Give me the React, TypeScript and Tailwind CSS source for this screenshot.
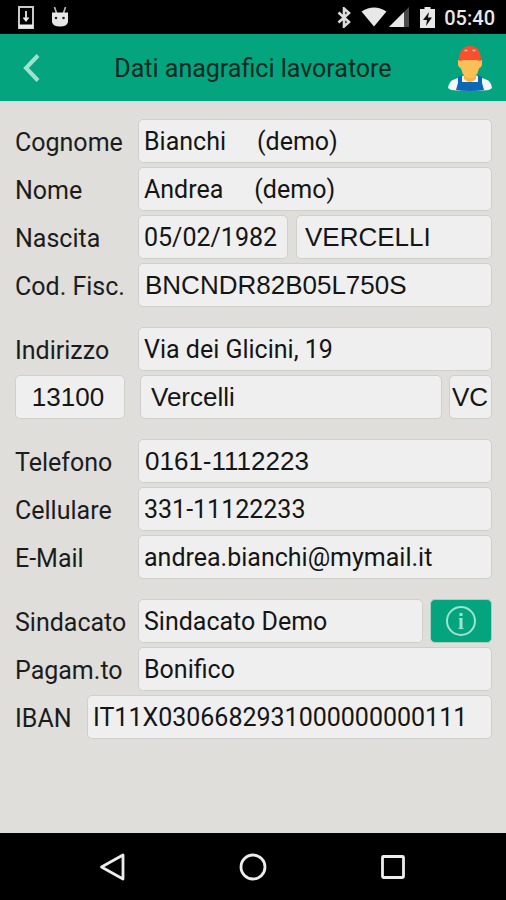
import React from 'react';
import { clsx } from 'clsx';

type FieldProps = React.InputHTMLAttributes<HTMLInputElement>;

function Field({ className, ...props }: FieldProps) {
  return (
    <input
      {...props}
      className={clsx(
        'h-11 min-w-0 rounded-[5px] border border-[#cfcfcc] bg-[#efefef] text-[#151515] outline-none',
        className,
      )}
    />
  );
}

function Label({ htmlFor, children, short }: { htmlFor: string; children: React.ReactNode; short?: boolean }) {
  return (
    <label
      htmlFor={htmlFor}
      className={clsx('shrink-0 whitespace-nowrap pt-1 text-[25px] text-[#1c1c1c]', short ? 'w-18' : 'w-[123px]')}
    >
      {children}
    </label>
  );
}

function Row({ children }: { children: React.ReactNode }) {
  return <div className="flex items-center">{children}</div>;
}

function Group({ children }: { children: React.ReactNode }) {
  return <div className="flex flex-col gap-1">{children}</div>;
}

const roboto = "font-['Roboto',sans-serif] text-[25px] px-[5px]";
const arial = "font-['Liberation_Sans',Arial,sans-serif] text-[26px]";

function StatusBar() {
  return (
    <div className="flex h-[34px] items-center bg-black pl-[18px] pr-[11px] text-[#e8e8e8]">
      <svg width="16" height="23" viewBox="0 0 16 23" aria-hidden="true">
        <rect x="1" y="1" width="14" height="21" fill="none" stroke="#c9c9c9" strokeWidth="2" />
        <path d="M1 20.500h14" stroke="#ededed" strokeWidth="4" />
        <path d="M8 5v9M5.500 11.500l2.500 3 2.500-3" fill="none" stroke="#e8e8e8" strokeWidth="1.800" />
      </svg>
      <svg width="18" height="20" viewBox="0 0 18 20" className="ml-[17px]" aria-hidden="true">
        <path d="M3.500 0l2 6M14.500 0l-2 6" stroke="#bdbdbd" strokeWidth="1.600" />
        <path d="M1 5.500h16V15q-1 4.500-8 4.500T1 15z" fill="#e8e8e8" />
        <circle cx="5" cy="11" r="1.300" fill="#222" />
        <circle cx="12.500" cy="11" r="1.300" fill="#222" />
      </svg>
      <div className="flex-1" />
      <svg width="14" height="21" viewBox="0 0 14 21" aria-hidden="true">
        <path d="M1.500 5.500L12 15l-5 4.500V1.500L12 6 1.500 15.500" fill="none" stroke="#dcdcdc" strokeWidth="2.600" />
      </svg>
      <svg width="26" height="20" viewBox="0 0 26 20" className="ml-[10px]" aria-hidden="true">
        <path d="M0.500 4.500Q13-3.500 25.500 4.500L13 19.500z" fill="#e8e8e8" />
      </svg>
      <svg width="20" height="20" viewBox="0 0 20 20" className="ml-[2px]" aria-hidden="true">
        <path d="M20 0v20H0z" fill="#4a4a4a" />
        <path d="M15 5v15H0z" fill="#e8e8e8" />
      </svg>
      <svg width="15" height="21" viewBox="0 0 15 21" className="ml-[11px]" aria-hidden="true">
        <path d="M4.500 0h6v2H15v19H0V2h4.500z" fill="#e8e8e8" />
        <path d="M9 5l-6 8h4l-1 6 6-8.500H8z" fill="#111" />
      </svg>
      <span className="ml-[9px] pt-[2px] text-[20px] font-medium">05:40</span>
    </div>
  );
}

function WorkerIcon() {
  return (
    <svg width="44" height="46" viewBox="0 0 44 46" aria-hidden="true">
      <path d="M0 43q1-7 6-8.500l10-4h12l10 4q5 1.500 6 8.500-2 2.500-9 2.500H9Q2 45.500 0 43z" fill="#f4f6fa" />
      <path d="M16 26h12v8q-6 6-12 0z" fill="#f6b444" />
      <path d="M10 15h24v5q-1 3-3 3.500-2 9.500-9 9.500t-9-9.500q-2-.5-3-3.500z" fill="#fbbf57" />
      <path d="M11 16Q11 1 22 1t11 15q-11-2.500-22 0z" fill="#f8502f" />
      <path d="M16.500 5.500h3M24.500 5.500h3" stroke="#ffb7a4" strokeWidth="1.500" />
      <path d="M10 32l4-2v7h16v-7l4 2v6l2 7q-14 2-28 0l2-7z" fill="#0d67b8" />
    </svg>
  );
}

export default function App() {
  return (
    <div className="flex min-h-screen flex-col bg-[#dfdeda] font-['Roboto',sans-serif]">
      <StatusBar />

      {/* Title bar */}
      <header className="flex h-[67px] items-center bg-[#04a57e] pl-[14px] pr-[14px]">
        <button type="button" aria-label="Indietro" className="flex w-11 justify-start pl-[9px]">
          <svg width="17" height="28" viewBox="0 0 17 28" aria-hidden="true">
            <path d="M15 1.500L3 14l12 12.500" fill="none" stroke="#9fe3cf" strokeWidth="4" />
          </svg>
        </button>
        <h1 className="flex-1 whitespace-nowrap pt-[2px] text-center text-[25px] text-[#062a21]">Dati anagrafici lavoratore</h1>
        <WorkerIcon />
      </header>

      <main className="flex flex-1 flex-col gap-5 pb-6 pl-[15px] pr-[14px] pt-[18px]">
        <Group>
          <Row>
            <Label htmlFor="cognome">Cognome</Label>
            <Field id="cognome" className={clsx(roboto, 'flex-1')} defaultValue="Bianchi     (demo)" />
          </Row>
          <Row>
            <Label htmlFor="nome">Nome</Label>
            <Field id="nome" className={clsx(roboto, 'flex-1')} defaultValue="Andrea     (demo)" />
          </Row>
          <Row>
            <Label htmlFor="nascita">Nascita</Label>
            <Field id="nascita" className={clsx(roboto, 'w-[150px]')} defaultValue="05/02/1982" />
            <Field aria-label="Luogo di nascita" className={clsx(arial, 'ml-2 flex-1 px-2')} defaultValue="VERCELLI" />
          </Row>
          <Row>
            <Label htmlFor="codfisc">Cod. Fisc.</Label>
            <Field id="codfisc" className={clsx(arial, 'flex-1 px-[6px]')} defaultValue="BNCNDR82B05L750S" />
          </Row>
        </Group>

        <Group>
          <Row>
            <Label htmlFor="indirizzo">Indirizzo</Label>
            <Field id="indirizzo" className={clsx(roboto, 'flex-1')} defaultValue="Via dei Glicini, 19" />
          </Row>
          <Row>
            <Field aria-label="CAP" className={clsx(arial, 'w-[110px] pr-1 text-center')} defaultValue="13100" />
            <Field aria-label="Comune" className={clsx(arial, 'ml-[15px] flex-1 px-[10px]')} defaultValue="Vercelli" />
            <Field aria-label="Provincia" className={clsx(arial, 'ml-[7px] w-[43px] pl-[2px]')} defaultValue="VC" />
          </Row>
        </Group>

        <Group>
          <Row>
            <Label htmlFor="telefono">Telefono</Label>
            <Field id="telefono" type="tel" className={clsx(arial, 'flex-1 px-[6px]')} defaultValue="0161-1112223" />
          </Row>
          <Row>
            <Label htmlFor="cellulare">Cellulare</Label>
            <Field id="cellulare" type="tel" className={clsx(roboto, 'flex-1')} defaultValue="331-11122233" />
          </Row>
          <Row>
            <Label htmlFor="email">E-Mail</Label>
            <Field id="email" type="email" className={clsx(roboto, 'flex-1')} defaultValue="andrea.bianchi@mymail.it" />
          </Row>
        </Group>

        <Group>
          <Row>
            <Label htmlFor="sindacato">Sindacato</Label>
            <Field id="sindacato" className={clsx(roboto, 'flex-1')} defaultValue="Sindacato Demo" />
            <button
              type="button"
              aria-label="Informazioni sindacato"
              className="ml-[7px] flex h-11 w-[62px] items-center justify-center rounded-[5px] border border-[#a9cfc1] bg-[#04a57e]"
            >
              <svg width="32" height="32" viewBox="0 0 32 32" aria-hidden="true">
                <circle cx="16" cy="16" r="14" fill="none" stroke="#9fe3cf" strokeWidth="2" />
                <path d="M16 8v3M16 13v11" fill="none" stroke="#9fe3cf" strokeWidth="3" />
                <path d="M14 13.500h2M13.500 23.500h5" fill="none" stroke="#9fe3cf" strokeWidth="1" />
              </svg>
            </button>
          </Row>
          <Row>
            <Label htmlFor="pagamento">Pagam.to</Label>
            <Field id="pagamento" className={clsx(roboto, 'flex-1')} defaultValue="Bonifico" />
          </Row>
          <Row>
            <Label htmlFor="iban" short>IBAN</Label>
            <Field id="iban" className={clsx(roboto, 'flex-1')} defaultValue="IT11X0306682931000000000111" />
          </Row>
        </Group>
      </main>

      {/* Android navigation bar */}
      <nav className="flex h-[67px] items-center justify-center gap-28 bg-black">
        <button type="button" aria-label="Indietro (sistema)">
          <svg width="28" height="28" viewBox="0 0 28 28" aria-hidden="true">
            <path d="M24 2v24L2.500 14z" fill="none" stroke="#ededed" strokeWidth="2.800" strokeLinejoin="round" />
          </svg>
        </button>
        <button type="button" aria-label="Home">
          <svg width="28" height="28" viewBox="0 0 28 28" aria-hidden="true">
            <circle cx="14" cy="14" r="12" fill="none" stroke="#ededed" strokeWidth="2.800" />
          </svg>
        </button>
        <button type="button" aria-label="App recenti">
          <svg width="28" height="28" viewBox="0 0 28 28" aria-hidden="true">
            <rect x="3.500" y="3.500" width="21" height="21" rx="1" fill="none" stroke="#ededed" strokeWidth="2.800" />
          </svg>
        </button>
      </nav>
    </div>
  );
}
